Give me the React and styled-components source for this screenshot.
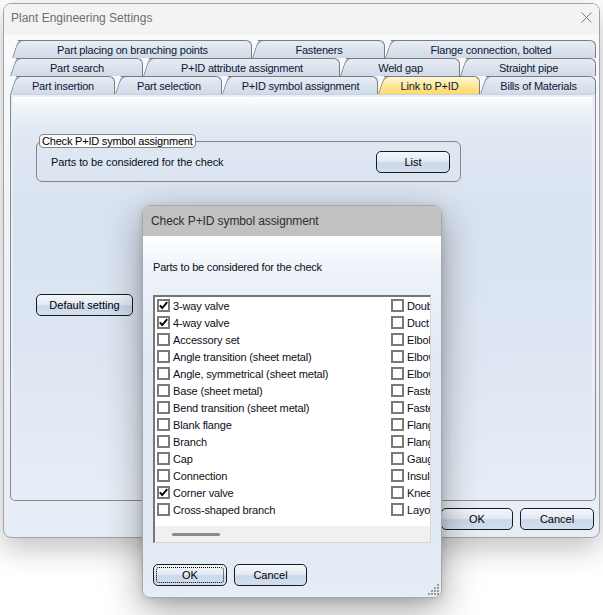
import React from 'react';
import styled, { createGlobalStyle } from 'styled-components';

const Global = createGlobalStyle`
  html, body { margin: 0; padding: 0; background: #ffffff; }
  body { font-family: "Liberation Sans", Arial, sans-serif; -webkit-font-smoothing: antialiased; }
  #root { width: 603px; height: 615px; overflow: hidden; }
  * { box-sizing: border-box; }
`;

const Stage = styled.div`
  position: relative;
  width: 603px;
  height: 615px;
  padding: 3px 0 0 3px;
  background: #ffffff;
  overflow: hidden;
`;

const Window = styled.div`
  width: 597px;
  height: 535px;
  border: 1px solid #a3a3a3;
  border-radius: 8px;
  background: linear-gradient(180deg, #fafbfc 0px, #f3f6fa 120px, #e6edf6 100%);
  box-shadow: 0 10px 30px rgba(0, 0, 0, 0.26);
  display: flex;
  flex-direction: column;
  overflow: hidden;
`;

const TitleBar = styled.div`
  flex: none;
  height: 31px;
  background: #f3f3f3;
  display: flex;
  align-items: flex-start;
  justify-content: space-between;
  padding: 7px 7px 0 7px;
`;

const TitleText = styled.span`
  font-size: 12px;
  line-height: 14px;
  color: #6f6f6f;
`;

const CloseIcon = styled.svg`
  margin-top: 1px;
`;

const Body = styled.div`
  flex: 1;
  display: flex;
  flex-direction: column;
  padding: 5px 3px 0 6px;
`;

const TabRow = styled.div`
  display: flex;
  height: 18px;
  padding-left: ${p => p.$indent || 0}px;
`;

const Tab = styled.div`
  position: relative;
  flex: ${p => (p.$w ? `0 0 ${p.$w}px` : '1 1 auto')};
  height: 18px;
  border-top: 1px solid #7c7c7c;
  border-right: 1px solid #7c7c7c;
  border-top-right-radius: 6px;
  background: ${p =>
    p.$active
      ? 'linear-gradient(180deg, #fff7d8 0%, #ffe9a0 45%, #ffd766 100%)'
      : 'linear-gradient(180deg, #e7edf5 0%, #dbe3ee 50%, #d1dbe8 100%)'};
  clip-path: polygon(0 100%, 6px 0, 100% 0, 100% 100%);
  display: flex;
  align-items: center;
  justify-content: center;
  font-size: 11px;
  letter-spacing: -0.2px;
  color: #0e1733;
  white-space: nowrap;
  padding-left: 2px;

  &::before {
    content: '';
    position: absolute;
    left: 0;
    top: -1px;
    bottom: 0;
    width: 10px;
    border-left: 1px solid #7c7c7c;
    border-top: 1px solid #7c7c7c;
    border-top-left-radius: 5px 7px;
    transform: skewX(-18deg);
    transform-origin: 0 100%;
  }
`;

const Panel = styled.div`
  height: 407px;
  border: 1px solid #8a8a8a;
  border-top-color: #c9d3df;
  border-radius: 0 0 5px 5px;
  background: #e9eef6;
  padding: 2px 3px 3px 2px;
  display: flex;
`;

const PanelInner = styled.div`
  flex: 1;
  border-radius: 0 0 3px 3px;
  background: linear-gradient(180deg, #fdfdfe 0px, #eef3f9 12px, #dfe8f3 36px, #d9e3f0 120px, #dde6f2 260px, #e8eef7 100%);
  display: flex;
  flex-direction: column;
  align-items: flex-start;
  padding: 37px 0 0 23px;
`;

const GroupBox = styled.fieldset`
  margin: 0;
  width: 425px;
  border: 1px solid #858585;
  border-radius: 6px;
  padding: 3px 10px 8px 14px;
`;

const Legend = styled.legend`
  margin-left: -12px;
  padding: 0 2px;
  border: 1px solid #858585;
  border-radius: 4px;
  background: #fbfcfe;
  font-size: 11px;
  line-height: 12px;
  letter-spacing: -0.2px;
  color: #000;
`;

const GroupRow = styled.div`
  display: flex;
  align-items: center;
  justify-content: space-between;
`;

const Label = styled.span`
  font-size: 11px;
  color: #0a0f20;
  letter-spacing: ${p => p.$ls || 0}px;
`;

const Button = styled.div`
  position: relative;
  width: ${p => p.$w}px;
  height: 22px;
  border: 1px solid #1b1b1b;
  border-radius: 5px;
  background: linear-gradient(180deg, #f4f7fb 0%, #e4ebf5 46%, #cad8eb 54%, #d3dfee 100%);
  display: flex;
  align-items: center;
  justify-content: center;
  font-size: 11px;
  color: #000;
  margin-top: ${p => p.$mt || 0}px;

  &::after {
    content: '';
    display: ${p => (p.$focus ? 'block' : 'none')};
    position: absolute;
    inset: 2px;
    border: 1px dotted #000;
    border-radius: 3px;
  }
`;

const Footer = styled.div`
  display: flex;
  justify-content: flex-end;
  gap: 7px;
  padding: 7px 2px 0 0;
`;

const Dialog = styled.div`
  position: absolute;
  left: 142px;
  top: 205px;
  width: 300px;
  height: 393px;
  border: 1px solid #a9a9a9;
  border-radius: 8px;
  overflow: hidden;
  display: flex;
  flex-direction: column;
  box-shadow: 0 12px 38px rgba(0, 0, 0, 0.36), 0 2px 8px rgba(0, 0, 0, 0.12);
  background: linear-gradient(180deg, #ffffff 0px, #ffffff 30px, #eef3f9 62px, #e2eaf4 150px, #dfe8f3 300px, #e6edf6 100%);
`;

const DialogTitle = styled.div`
  flex: none;
  height: 30px;
  background: #c1c1c1;
  padding: 8px 8px 0 8px;
  font-size: 12px;
  line-height: 14px;
  letter-spacing: -0.1px;
  color: #2e2e2e;
`;

const DialogBody = styled.div`
  position: relative;
  flex: 1;
  display: flex;
  flex-direction: column;
  align-items: flex-start;
  padding: 24px 10px 0 10px;
`;

const DialogLabel = styled.div`
  font-size: 11px;
  line-height: 14px;
  letter-spacing: -0.2px;
  color: #0a0f20;
`;

const ListBox = styled.div`
  margin-top: 21px;
  width: 278px;
  height: 248px;
  border-top: 2px solid #767676;
  border-left: 2px solid #767676;
  border-right: 1px solid #d6d6d6;
  border-bottom: 1px solid #d6d6d6;
  background: #ffffff;
  display: flex;
  flex-direction: column;
  overflow: hidden;
`;

const ItemGrid = styled.div`
  height: 229px;
  display: grid;
  grid-template-rows: repeat(13, 17px);
  grid-auto-flow: column;
  grid-auto-columns: 234px;
  padding: 0 0 0 2px;
  overflow: hidden;
`;

const Item = styled.div`
  display: flex;
  align-items: center;
  gap: 3px;
  white-space: nowrap;
  overflow: hidden;
  font-size: 11px;
  letter-spacing: -0.15px;
  color: #0a0f20;
`;

const Box = styled.span`
  flex: none;
  width: 13px;
  height: 13px;
  border: 2px solid #7a7a7a;
  background: #ffffff;
  display: flex;
  align-items: center;
  justify-content: center;
`;

const HScroll = styled.div`
  flex: 1;
  background: #f0f0f0;
  display: flex;
  align-items: center;
  padding-left: 17px;
`;

const Thumb = styled.div`
  width: 48px;
  height: 3px;
  border-radius: 2px;
  background: #8a8a8a;
`;

const DialogButtons = styled.div`
  display: flex;
  gap: 7px;
  margin-top: 21px;
`;

const Grip = styled.svg`
  position: absolute;
  right: 0;
  bottom: 0;
`;

const Check = () => (
  <svg width="9" height="9" viewBox="0 0 9 9">
    <polyline points="0.8,4.4 3.2,7 8.2,1.2" fill="none" stroke="#000" strokeWidth="1.9" />
  </svg>
);

const CheckItem = ({ label, checked }) => (
  <Item>
    <Box>{checked && <Check />}</Box>
    {label}
  </Item>
);

const items = [
  ['3-way valve', true],
  ['4-way valve', true],
  ['Accessory set'],
  ['Angle transition (sheet metal)'],
  ['Angle, symmetrical (sheet metal)'],
  ['Base (sheet metal)'],
  ['Bend transition (sheet metal)'],
  ['Blank flange'],
  ['Branch'],
  ['Cap'],
  ['Connection'],
  ['Corner valve', true],
  ['Cross-shaped branch'],
  ['Double nipple'],
  ['Duct transition'],
  ['Elbolet'],
  ['Elbow'],
  ['Elbow (sheet metal)'],
  ['Fastener'],
  ['Fastener set'],
  ['Flange'],
  ['Flange (sheet metal)'],
  ['Gauge'],
  ['Insulation'],
  ['Knee'],
  ['Layout'],
];

const rows = [
  { indent: 2, tabs: [['Part placing on branching points', 240], ['Fasteners', 133], ['Flange connection, bolted']] },
  { indent: 0, tabs: [['Part search', 133], ['P+ID attribute assignment', 197], ['Weld gap', 120], ['Straight pipe']] },
  {
    indent: 0,
    tabs: [['Part insertion', 105], ['Part selection', 107], ['P+ID symbol assignment', 156], ['Link to P+ID', 102, true], ['Bills of Materials']],
  },
];

export default function App() {
  return (
    <>
      <Global />
      <Stage>
        <Window>
          <TitleBar>
            <TitleText>Plant Engineering Settings</TitleText>
            <CloseIcon width="11" height="11" viewBox="0 0 11 11">
              <path d="M0.5 0.5 L10.5 10.5 M10.5 0.5 L0.5 10.5" stroke="#7a7a7a" strokeWidth="1" fill="none" />
            </CloseIcon>
          </TitleBar>
          <Body>
            {rows.map((r, i) => (
              <TabRow key={i} $indent={r.indent}>
                {r.tabs.map(([t, w, a]) => (
                  <Tab key={t} $w={w} $active={a}>
                    {t}
                  </Tab>
                ))}
              </TabRow>
            ))}
            <Panel>
              <PanelInner>
                <GroupBox>
                  <Legend>Check P+ID symbol assignment</Legend>
                  <GroupRow>
                    <Label $ls={-0.1}>Parts to be considered for the check</Label>
                    <Button $w={74}>List</Button>
                  </GroupRow>
                </GroupBox>
                <Button $w={97} $mt={112}>Default setting</Button>
              </PanelInner>
            </Panel>
            <Footer>
              <Button $w={72}>OK</Button>
              <Button $w={74}>Cancel</Button>
            </Footer>
          </Body>
        </Window>

        <Dialog>
          <DialogTitle>Check P+ID symbol assignment</DialogTitle>
          <DialogBody>
            <DialogLabel>Parts to be considered for the check</DialogLabel>
            <ListBox>
              <ItemGrid>
                {items.map(([l, c]) => (
                  <CheckItem key={l} label={l} checked={c} />
                ))}
              </ItemGrid>
              <HScroll>
                <Thumb />
              </HScroll>
            </ListBox>
            <DialogButtons>
              <Button $w={74} $focus>OK</Button>
              <Button $w={73}>Cancel</Button>
            </DialogButtons>
            <Grip width="14" height="14" viewBox="0 0 14 14">
              {[
                [10, 1],
                [7, 4], [10, 4],
                [4, 7], [7, 7], [10, 7],
                [1, 10], [4, 10], [7, 10], [10, 10],
              ].map(([x, y]) => (
                <rect key={`${x}-${y}`} x={x} y={y} width="2" height="2" fill="#9a9a9a" />
              ))}
            </Grip>
          </DialogBody>
        </Dialog>
      </Stage>
    </>
  );
}
